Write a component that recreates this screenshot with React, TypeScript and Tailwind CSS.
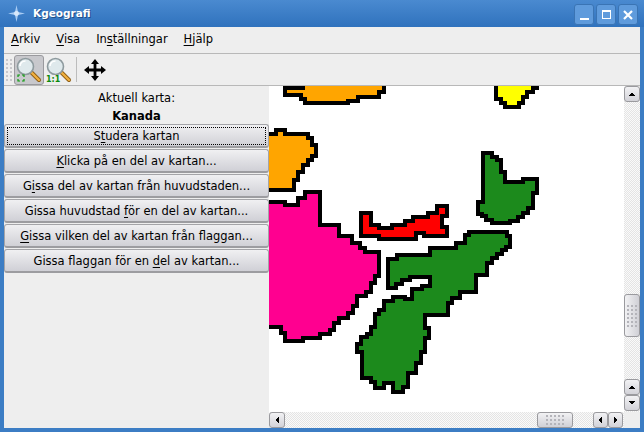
import React from 'react';

const ORANGE = '#ffa500';
const GREEN = '#1c8a1c';

const regions: { fill: string; points: string }[] = [
  { fill: ORANGE, points: '303,80 303,88 285,88 285,95 301,95 301,99 305,99 305,103 348,103 348,101 358,101 358,97 379,97 379,92 384,92 384,80' },
  { fill: '#ffff00', points: '496,80 496,99 501,99 501,103 505,103 505,107 519,107 519,103 523,103 523,97 527,97 527,92 533,92 533,88 537,88 537,80' },
  { fill: ORANGE, points: '265,134 276,134 276,130 285,130 285,134 308,134 308,138 312,138 312,145 316,145 316,156 312,156 312,160 308,160 308,165 303,165 303,172 298,172 298,180 294,180 294,190 265,190' },
  { fill: '#ff0090', points: '265,202 285,202 285,205 298,205 298,198 305,198 305,192 320,192 320,225 339,225 339,236 352,236 352,243 360,243 360,248 365,248 365,252 379,252 379,276 375,276 375,283 371,283 371,292 366,292 366,296 357,296 357,306 353,306 353,313 348,313 348,318 339,318 339,323 334,323 334,330 330,330 330,334 320,334 320,338 303,338 303,341 285,341 285,333 281,333 281,327 265,327' },
  { fill: '#ff0000', points: '361,213 371,213 371,225 379,225 379,228 392,228 392,225 405,225 405,221 413,221 413,217 428,217 428,213 437,213 437,206 447,206 447,216 442,216 442,227 447,227 447,236 424,236 424,233 416,233 416,239 379,239 379,236 361,236' },
  { fill: GREEN, points: '483,153 492,153 492,157 497,157 497,160 501,160 501,172 505,172 505,182 523,182 523,179 537,179 537,193 533,193 533,208 528,208 528,213 523,213 523,217 518,217 518,221 510,221 510,223 492,223 492,220 486,220 486,216 482,216 482,214 478,214 478,202 483,202' },
  { fill: GREEN, points: '469,232 507,232 507,236 510,236 510,247 506,247 506,250 502,250 502,254 497,254 497,258 492,258 492,263 487,263 487,275 476,275 476,292 460,292 460,298 452,298 452,303 448,303 448,315 425,315 425,328 429,328 429,338 425,338 425,352 421,352 421,363 416,363 416,373 408,373 408,387 403,387 403,392 393,392 393,383 384,383 384,388 375,388 375,382 371,382 371,378 362,378 362,352 357,352 357,344 361,344 361,337 367,337 367,334 371,334 371,327 375,327 375,314 379,314 379,310 384,310 384,301 393,301 393,297 405,297 405,299 412,299 412,289 422,289 422,286 430,286 430,277 410,277 410,280 402,280 402,284 396,284 396,288 388,288 388,259 397,259 397,255 430,255 430,248 456,248 456,243 465,243 465,235 469,235' },
];

const btn =
  'h-[24px] w-[265px] shrink-0 rounded-[3px] border border-[#a4a4a8] border-b-2 border-b-[#9c9ca0] bg-gradient-to-b from-[#f0f0f2] to-[#d0d0d6] text-center text-[11.5px] leading-[22px] text-black';

const U = ({ children }: { children: React.ReactNode }) => <span className="underline underline-offset-2">{children}</span>;

const Grip = ({ cols, rows, color = 'bg-[#b4b4ba]' }: { cols: number; rows: number; color?: string }) => (
  <div className="grid gap-[2px]" style={{ gridTemplateColumns: `repeat(${cols}, 2px)` }}>
    {Array.from({ length: cols * rows }).map((_, i) => (
      <span key={i} className={`h-[2px] w-[2px] ${color}`} />
    ))}
  </div>
);

const ArrowBtn = ({ dir, className }: { dir: 'up' | 'down' | 'left' | 'right'; className: string }) => {
  const pts = { up: '4,10 12,10 8,6', down: '4,6 12,6 8,10', left: '10,4 10,12 6,8', right: '6,4 6,12 10,8' }[dir];
  return (
    <div className={`shrink-0 rounded-[3px] border border-[#9a9a9e] bg-gradient-to-b from-[#f2f2f4] to-[#d2d2d8] ${className}`}>
      <svg viewBox="0 0 16 16" className="h-full w-full" shapeRendering="crispEdges">
        <polygon points={pts} fill="#000" />
      </svg>
    </div>
  );
};

const Magnifier = ({ children }: { children: React.ReactNode }) => (
  <svg viewBox="0 0 26 26" className="h-[26px] w-[26px]">
    <line x1="15" y1="15" x2="23" y2="23" stroke="#8a5a10" strokeWidth="4" strokeLinecap="round" />
    <line x1="15" y1="15" x2="23" y2="23" stroke="#f0b040" strokeWidth="2.4" strokeLinecap="round" />
    <circle cx="9.5" cy="9.5" r="8" fill="#dfe9ec" stroke="#8e9a9e" strokeWidth="1.6" />
    <path d="M4 9a5.5 5.5 0 0 1 5.5-5" fill="none" stroke="#fff" strokeWidth="1.6" />
    {children}
  </svg>
);

export default function App() {
  return (
    <div className="flex h-[432px] w-[644px] flex-col overflow-hidden bg-[#3c7dc4] font-['DejaVu_Sans',sans-serif]">
      {/* titlebar */}
      <div className="flex h-[27px] shrink-0 items-center bg-gradient-to-b from-[#4a8ad0] to-[#2f72bd] pl-[8px] pr-[6px]">
        <svg viewBox="0 0 18 18" className="h-[17px] w-[17px]">
          <path d="M9 0 L10.6 7.4 L18 9 L10.6 10.6 L9 18 L7.4 10.6 L0 9 L7.4 7.4 Z" fill="#a8ccf4" />
          <circle cx="9" cy="9" r="2.6" fill="#d8e8fa" />
        </svg>
        <span className="ml-[8px] text-[10.5px] font-bold text-white [text-shadow:1px_1px_0_#1f4f88]">Kgeografi</span>
        <div className="ml-auto mt-[2px] flex gap-[2px]">
          <div className="flex h-[21px] w-[20px] items-center justify-center rounded-[3px] border border-[#3a74b4] bg-[#5f9bdc]">
            <span className="mt-[8px] h-[2px] w-[9px] bg-white" />
          </div>
          <div className="flex h-[21px] w-[20px] items-center justify-center rounded-[3px] border border-[#3a74b4] bg-[#5f9bdc]">
            <span className="h-[9px] w-[9px] border border-t-2 border-white" />
          </div>
          <div className="flex h-[21px] w-[20px] items-center justify-center rounded-[3px] border border-[#3a74b4] bg-[#5f9bdc]">
            <svg viewBox="0 0 10 10" className="h-[10px] w-[10px]">
              <path d="M1 1 L9 9 M9 1 L1 9" stroke="#fff" strokeWidth="2.2" />
            </svg>
          </div>
        </div>
      </div>

      <div className="mx-[4px] flex min-h-0 flex-1 flex-col bg-[#eeeeee]">
        {/* menu */}
        <div className="flex h-[27px] shrink-0 items-center gap-[16px] border-b border-[#b8b8b8] pl-[7px] text-[11.5px] text-black">
          <span><U>A</U>rkiv</span>
          <span><U>V</U>isa</span>
          <span>In<U>s</U>tällningar</span>
          <span><U>H</U>jälp</span>
        </div>

        {/* toolbar */}
        <div className="flex h-[32px] shrink-0 items-center border-b border-[#b8b8b8] pl-[2px]">
          <Grip cols={2} rows={6} color="bg-[#c8c8cc]" />
          <div className="ml-[2px] flex h-[30px] w-[30px] items-center justify-center rounded-[3px] border border-[#9a9a9e] bg-[#c8c8cc]">
            <Magnifier>
              <path d="M2 20v-2h2M6 18h2v2M8 22v2h-2M4 24h-2v-2" fill="none" stroke="#0a9a0a" strokeWidth="1.2" />
            </Magnifier>
          </div>
          <div className="flex h-[30px] w-[30px] items-center justify-center">
            <Magnifier>
              <rect x="0" y="18" width="11" height="8" fill="#eeeeee" />
              <text x="0" y="25" fontSize="8" fontWeight="700" fill="#0a8a0a" fontFamily="'DejaVu Sans', sans-serif">1:1</text>
            </Magnifier>
          </div>
          <span className="ml-[2px] h-[25px] w-px bg-[#bcbcbc]" />
          <svg viewBox="0 0 24 24" className="ml-[6px] h-[24px] w-[24px]">
            <path d="M12 1 L16 6 H13.4 V10.6 H18 V8 L23 12 L18 16 V13.4 H13.4 V18 H16 L12 23 L8 18 H10.6 V13.4 H6 V16 L1 12 L6 8 V10.6 H10.6 V6 H8 Z" fill="#000" />
          </svg>
        </div>

        <div className="flex min-h-0 flex-1">
          {/* side panel */}
          <div className="flex w-[265px] shrink-0 flex-col">
            <div className="mt-[3px] h-[19px] text-center text-[11.5px] leading-[19px] text-black">Aktuell karta:</div>
            <div className="h-[16px] text-center text-[11.5px] font-bold leading-[17px] text-black">Kanada</div>
            <div className="flex flex-col gap-px">
              <div className={`${btn} p-[2px]`}>
                <div className="h-[18px] border border-dotted border-black leading-[17px]">S<U>t</U>udera kartan</div>
              </div>
              <div className={btn}><U>K</U>licka på en del av kartan...</div>
              <div className={btn}>G<U>i</U>ssa del av kartan från huvudstaden...</div>
              <div className={btn}>Gissa huvudstad <U>f</U>ör en del av kartan...</div>
              <div className={btn}><U>G</U>issa vilken del av kartan från flaggan...</div>
              <div className={btn}>Gissa flaggan för en <U>d</U>el av kartan...</div>
            </div>
          </div>

          {/* map + scrollbars */}
          <div className="grid min-w-0 flex-1 grid-cols-[1fr_16px] grid-rows-[1fr_16px] bg-white">
            <svg viewBox="269 86 355 325" className="h-[325px] w-[355px]" shapeRendering="crispEdges">
              {regions.map((r, i) => (
                <polygon key={i} points={r.points} fill={r.fill} stroke="#000" strokeWidth="4" strokeLinejoin="miter" />
              ))}
            </svg>
            <div className="flex flex-col bg-[repeating-conic-gradient(#e4e4e4_0%_25%,#fafafa_0%_50%)] bg-[length:2px_2px]">
              <ArrowBtn dir="up" className="h-[16px] w-[16px]" />
              <div className="mt-[192px] flex h-[43px] w-[16px] shrink-0 items-center justify-center rounded-[3px] border border-[#9a9a9e] bg-gradient-to-r from-[#f2f2f4] to-[#d0d0d6]">
                <Grip cols={3} rows={6} />
              </div>
              <ArrowBtn dir="up" className="mt-[42px] h-[16px] w-[16px]" />
              <ArrowBtn dir="down" className="h-[16px] w-[16px]" />
            </div>
            <div className="flex items-center bg-[repeating-conic-gradient(#e4e4e4_0%_25%,#fafafa_0%_50%)] bg-[length:2px_2px]">
              <ArrowBtn dir="left" className="h-[16px] w-[16px]" />
              <div className="ml-[252px] flex h-[16px] w-[36px] shrink-0 items-center justify-center rounded-[3px] border border-[#9a9a9e] bg-gradient-to-b from-[#f2f2f4] to-[#d0d0d6]">
                <Grip cols={5} rows={3} />
              </div>
              <ArrowBtn dir="left" className="ml-[20px] h-[16px] w-[15px]" />
              <ArrowBtn dir="right" className="h-[16px] w-[15px]" />
            </div>
            <div className="bg-[#eeeeee]" />
          </div>
        </div>
      </div>
      <div className="h-[4px] shrink-0" />
    </div>
  );
}
